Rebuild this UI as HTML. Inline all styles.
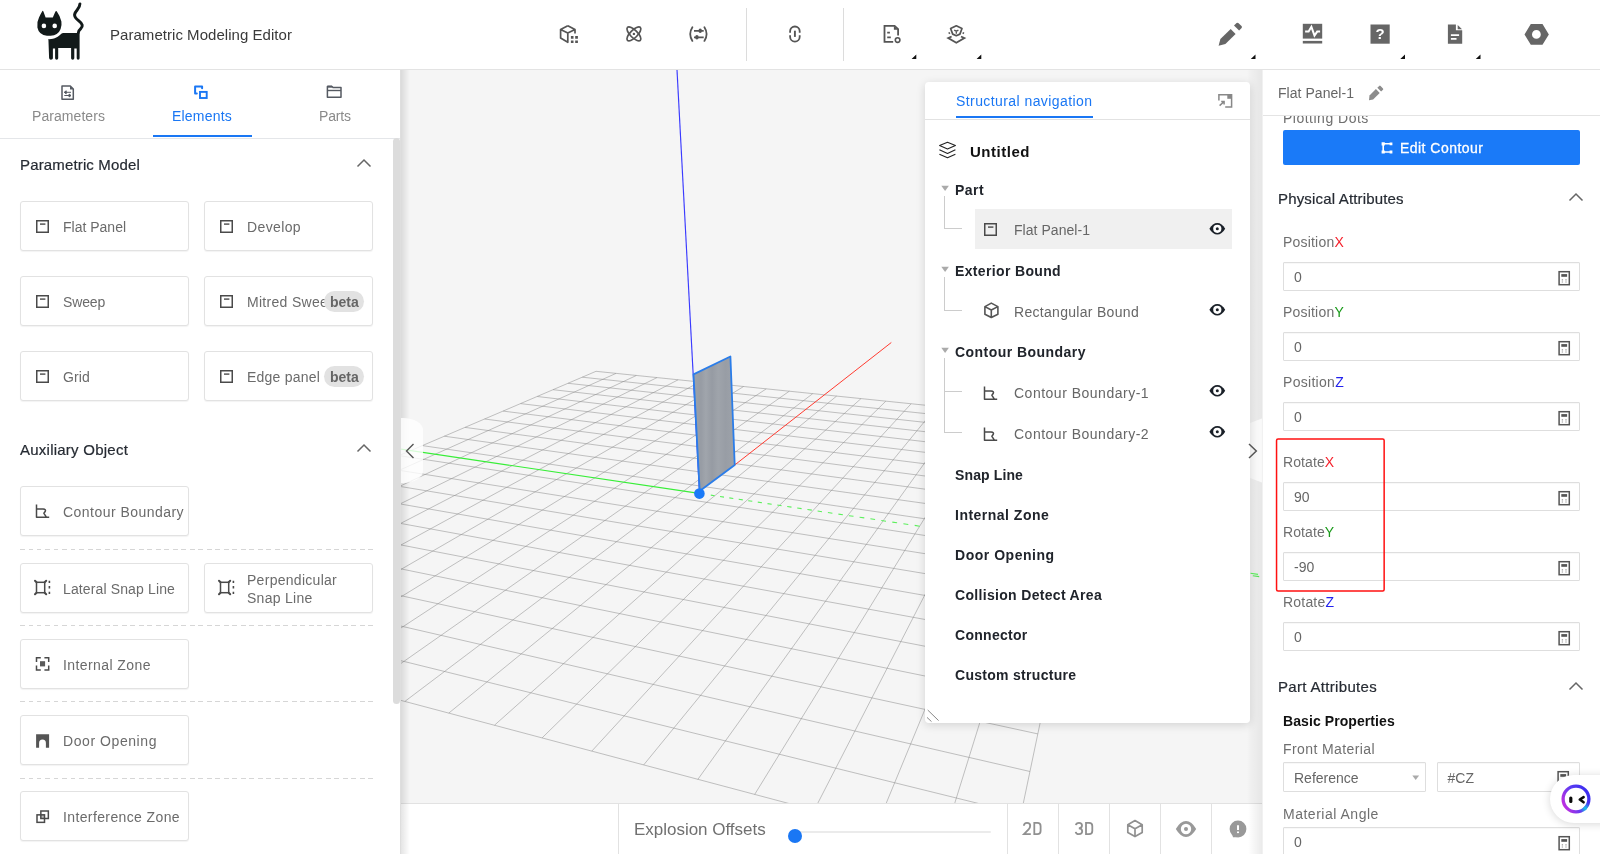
<!DOCTYPE html>
<html lang="en">
<head>
<meta charset="utf-8">
<title>Parametric Modeling Editor</title>
<style>
*{box-sizing:border-box;margin:0;padding:0}
html,body{width:1600px;height:854px;overflow:hidden;background:#fff}
body{font-family:"Liberation Sans",sans-serif;font-size:14px;color:#666;position:relative}
.abs{position:absolute}
.t{position:absolute;white-space:nowrap;line-height:1}
svg{position:absolute;overflow:visible}
#left,#right,#nav,#hdr,#bot{will-change:transform}
/* header */
#hdr{position:absolute;left:0;top:0;width:1600px;height:70px;background:#fff;border-bottom:1px solid #e3e3e3;z-index:5}
.vsep{position:absolute;top:8px;width:1px;height:53px;background:#dcdcdc}
/* left */
#left{position:absolute;left:0;top:70px;width:401px;height:784px;background:#fff;border-right:1px solid #dedede;z-index:4;overflow:hidden}
.tablbl{position:absolute;top:38px;font-size:14px;color:#8a8a8a;white-space:nowrap;line-height:16px}
.sech{position:absolute;left:20px;font-size:15px;color:#262b33;white-space:nowrap;line-height:18px;letter-spacing:-0.1px;-webkit-text-stroke:0.2px #262b33}
.btn{position:absolute;width:169px;height:50px;border:1px solid #e2e2e2;border-radius:3px;background:#fff;box-shadow:0 1px 1px rgba(0,0,0,.05)}
.btn .lb{position:absolute;left:42px;top:17px;font-size:14px;line-height:16px;color:#6b6b6b;white-space:nowrap}
.btn svg{left:15px;top:18px}
.dash{position:absolute;left:20px;width:353px;height:1px;background:repeating-linear-gradient(90deg,#d6d6d6 0 4.5px,transparent 4.5px 8.5px)}
.beta{position:absolute;top:14px;height:21px;border-radius:11px;background:#e2e2e2;color:#666;font-weight:bold;font-size:14px;line-height:22.5px;padding:0 5px 0 6.5px}
/* canvas */
#cv{position:absolute;left:401px;top:70px;width:862px;height:733px;background:#f5f5f5;overflow:hidden;z-index:1}
/* bottom bar */
#bot{position:absolute;left:401px;top:803px;width:862px;height:51px;background:#fff;box-shadow:inset 0 1px 0 #e2e2e2;z-index:3}
/* nav */
#nav{position:absolute;left:925px;top:82px;width:325px;height:641px;background:#fff;border-radius:4px;box-shadow:0 2px 10px rgba(0,0,0,.14);z-index:3}
.nb{position:absolute;left:30px;font-size:14px;font-weight:bold;color:#20242b;white-space:nowrap;line-height:16px}
.ni{position:absolute;left:89px;font-size:14px;color:#666;white-space:nowrap;line-height:16px}
/* right */
#right{position:absolute;left:1262px;top:70px;width:338px;height:784px;background:#fff;border-left:1px solid #f1f1f1;z-index:4;overflow:hidden}
.pl{position:absolute;left:20px;font-size:14px;color:#6f6f6f;white-space:nowrap;line-height:16px}
.inp{position:absolute;left:20px;width:297px;height:29px;border:1px solid #dedede;border-radius:1px;background:#fff;box-shadow:inset 0 1px 1px rgba(0,0,0,.03)}
.inp .v{position:absolute;left:10px;top:6px;font-size:14px;line-height:16px;color:#666}
</style>
</head>
<body>
<!-- HEADER -->
<div id="hdr">
<svg id="cat" style="left:30px;top:0" width="64" height="64" viewBox="0 0 64 64">
<path d="M12.4 10.9Q13 10.6 13.5 11.8L15.6 17.5H22.8L25.3 11.8Q26 10.6 26.7 11.2Q30.5 16.5 31.4 21.5Q32 25.5 30.6 29Q28.2 35.4 20.5 35.7H17Q9 35.2 7.4 27.5Q6.6 22 9 17.5Q10.5 14 12.4 10.9Z" fill="#121a1a"/>
<circle cx="13.9" cy="25.9" r="2.3" fill="#fff"/><circle cx="24.7" cy="25.9" r="2.3" fill="#fff"/>
<path d="M18.4 39.1C24 39.4 28.5 37 31.3 33.8Q32 33 33.3 33H49.6V58.3Q49.6 59.7 48.1 59.7Q46.7 59.7 46.7 58.3V48.4H44.3V58.3Q44.3 59.7 42.7 59.7Q41.1 59.7 41.1 58.3V48.1H28.2V58.3Q28.2 59.7 26.6 59.7Q25.1 59.7 25.1 58.3V48.4H22.9V58.3Q22.9 59.7 20.9 59.7Q19.2 59.7 19.1 58Z" fill="#121a1a"/>
<path d="M48.4 32.5C48.6 28.5 53 28.8 52.2 25C51.4 21 44 19.5 44.6 14.5C45.2 10.2 50 9 49.9 3.9" fill="none" stroke="#121a1a" stroke-width="3" stroke-linecap="round"/>
</svg>
<div class="t" id="title" style="letter-spacing:0.04px;left:110px;top:27px;font-size:15px;color:#3a3a3a">Parametric Modeling Editor</div>
<div class="vsep" style="left:746px"></div>
<div class="vsep" style="left:843px"></div>
<svg width="30" height="30" viewBox="0 0 30 30" style="left:554px;top:19px"><path d="M13.8 6.7L6.6 10.6V19.1L13.8 23.3V14.1L6.6 10.6M13.8 14.1L21 10.6L13.8 6.7M21 10.6V14.4" fill="none" stroke="#555" stroke-width="1.7" stroke-linejoin="round"/><path d="M16.9 17H19.5V19.7H16.9ZM21.2 17H23.9V19.7H21.2ZM16.9 21.4H19.5V24.1H16.9ZM21.2 21.4H23.9V24.1H21.2Z" fill="#555"/></svg>
<svg width="30" height="30" viewBox="0 0 30 30" style="left:619px;top:19px"><g fill="none" stroke="#555" stroke-width="1.7"><ellipse cx="14.9" cy="14.9" rx="9.1" ry="3.7" transform="rotate(45 14.9 14.9)"/><ellipse cx="14.9" cy="14.9" rx="9.1" ry="3.7" transform="rotate(-45 14.9 14.9)"/></g><circle cx="14.9" cy="14.9" r="1.2" fill="#555"/></svg>
<svg width="30" height="30" viewBox="0 0 30 30" style="left:684px;top:19px"><path d="M8.4 8.2Q6.2 11.5 6.2 15Q6.2 18.5 8.4 21.9M20.4 8.2Q22.6 11.5 22.6 15Q22.6 18.5 20.4 21.9" fill="none" stroke="#555" stroke-width="1.8" stroke-linecap="round"/><path d="M10 11.8H19.7M10 18.3H19.7" stroke="#555" stroke-width="1.8"/><ellipse cx="16.2" cy="11.8" rx="1.7" ry="2.2" fill="#555"/><ellipse cx="12.9" cy="18.3" rx="1.7" ry="2.2" fill="#555"/></svg>
<svg width="30" height="30" viewBox="0 0 30 30" style="left:780px;top:19px"><path d="M10.1 13.7V12.3A4.8 4.8 0 0 1 19.7 12.3V13.7M10.1 16.2V17.8A4.8 4.8 0 0 0 19.7 17.8V16.2" fill="none" stroke="#555" stroke-width="1.8"/><path d="M14.9 11.7V17.9" stroke="#555" stroke-width="1.9"/></svg>
<svg width="30" height="30" viewBox="0 0 30 30" style="left:876px;top:19px"><path d="M22.1 16.5V10.2L18.6 6.8H8.5V22.8H17.2" fill="none" stroke="#555" stroke-width="1.8" stroke-linejoin="miter"/><path d="M17.9 7V10.8H22Z" fill="#555"/><path d="M11.2 13.7H13.9M11.2 18.3H14.8" stroke="#555" stroke-width="1.8"/><circle cx="21.6" cy="21.1" r="2.3" fill="none" stroke="#555" stroke-width="1.6"/></svg>
<svg width="30" height="30" viewBox="0 0 30 30" style="left:941px;top:19px"><path d="M15.3 6.8L21 9.5L18.9 15.1L15.3 16.7L11.7 15.1L9.6 9.5Z" fill="none" stroke="#555" stroke-width="1.7" stroke-linejoin="round"/><path d="M13.2 11.1L15.3 12.2L17.4 11.1M15.3 12.2V14.8" fill="none" stroke="#555" stroke-width="1.3"/><path d="M10.6 17.5L7.2 19.1L15.3 23.8L23.4 19.1L20 17.5" fill="none" stroke="#555" stroke-width="1.8" stroke-linejoin="miter"/><path d="M7.8 13.4L8.8 14.8M22.8 13.4L21.8 14.8" stroke="#555" stroke-width="1.6"/></svg>
<svg width="40" height="40" viewBox="0 0 40 40" style="left:1212px;top:15px"><path d="M18.7 14.1L23.6 18.9L13.4 29L6.6 30.7L8.4 24.1Z" fill="#666"/><path d="M22 10.4L24.6 8Q25.6 7.3 26.6 8.2L29.5 11Q30.4 12 29.6 13L27.1 15.4Z" fill="#666"/></svg>
<svg width="40" height="40" viewBox="0 0 40 40" style="left:1292px;top:14px"><rect x="10.8" y="9.8" width="19.4" height="14.8" fill="#666"/><rect x="10.8" y="26.9" width="19.4" height="2.6" fill="#666"/><path d="M13.1 17.6H16.6L19.4 12.8L22.5 21.6L25.2 17.6H28.1" fill="none" stroke="#fff" stroke-width="2" stroke-linejoin="miter"/></svg>
<svg width="40" height="40" viewBox="0 0 40 40" style="left:1360px;top:14px"><rect x="10.5" y="10.5" width="19.2" height="19.2" fill="#666"/><text x="20.1" y="25.3" text-anchor="middle" font-family="Liberation Sans" font-weight="bold" font-size="15" fill="#fff">?</text></svg>
<svg width="40" height="40" viewBox="0 0 40 40" style="left:1435px;top:14px"><path d="M12.9 10.5H20.9V16.3H27.2V29.7H12.9Z" fill="#666"/><path d="M22.7 10.9L27 15.2H22.7Z" fill="#666"/><path d="M15.9 21.1H24.1M15.9 24.8H21.5" stroke="#fff" stroke-width="1.8"/></svg>
<svg width="40" height="40" viewBox="0 0 40 40" style="left:1517px;top:14px"><path d="M7.5 20.4L13.8 10.1H25.5L31.85 20.4L25.5 30.7H13.8Z M19.4 16A4.4 4.4 0 1 0 19.4 24.8A4.4 4.4 0 1 0 19.4 16Z" fill="#666" fill-rule="evenodd"/></svg>
<svg width="1600" height="70" viewBox="0 0 1600 70" style="left:0;top:0"><path d="M911.6 59H916.3V54.6ZM976.6 59H981.3V54.6ZM1250.8 59H1255.5V54.6ZM1400.3 59H1405V54.6ZM1475.8 59H1480.5V54.6Z" fill="#111"/></svg>
</div>

<!-- LEFT PANEL -->
<div id="left">
<!-- tabs -->
<svg width="30" height="30" viewBox="0 0 30 30" style="left:53px;top:7px"><path d="M9 9H17.3L20.3 12V22.2H9Z" fill="none" stroke="#555a62" stroke-width="1.5" stroke-linejoin="round"/><path d="M17 9V12.4H20.3Z" fill="#555a62"/><path d="M11.3 15.3H18M11.3 15.3L13.2 13.8V16.8ZM11.3 18.5H18M18 18.5L16.1 17V20Z" fill="#555a62" stroke="#555a62" stroke-width="1"/></svg>
<svg width="30" height="30" viewBox="0 0 30 30" style="left:186px;top:7px"><path d="M10.8 16.4H9.1V9.4H16.1V11.2" fill="none" stroke="#1a77f4" stroke-width="2" stroke-linejoin="round" stroke-linecap="round"/><rect x="14" y="14.9" width="6.7" height="6.1" fill="none" stroke="#1a77f4" stroke-width="1.9"/></svg>
<svg width="30" height="30" viewBox="0 0 30 30" style="left:319px;top:7px"><path d="M8.4 9.5H13L14 10.6H22V20.2H8.4Z" fill="none" stroke="#555a62" stroke-width="1.5" stroke-linejoin="round"/><path d="M8.4 9.6H13" stroke="#555a62" stroke-width="2"/><path d="M8.4 13.5H22" stroke="#555a62" stroke-width="1.4"/></svg>
<div class="tablbl" id="tb1" style="letter-spacing:0.06px;left:32px">Parameters</div>
<div class="tablbl" id="tb2" style="letter-spacing:0.21px;left:172px;color:#1a77f4">Elements</div>
<div class="tablbl" id="tb3" style="letter-spacing:-0.14px;left:319px">Parts</div>
<div class="abs" style="left:0;top:68px;width:400px;height:1px;background:#e4e6e9"></div>
<div class="abs" style="left:153px;top:65px;width:99px;height:2px;background:#1a77f4"></div>
<!-- scrollbar -->
<div class="abs" style="left:393px;top:68px;width:6.5px;height:566px;background:#dcdcdc;border-radius:3.5px"></div>
<!-- section 1 -->
<div class="sech" id="sh1" style="letter-spacing:0.15px;top:86px">Parametric Model</div>
<svg width="16" height="10" viewBox="0 0 16 10" style="left:356px;top:88px"><path d="M1.5 8.5L8 2L14.5 8.5" fill="none" stroke="#666" stroke-width="1.5"/></svg>
<div class="btn" style="left:20px;top:131px"><svg style="left:7px;top:10px" width="30" height="30" viewBox="0 0 30 30"><rect x="8.75" y="8.75" width="11.5" height="11.5" fill="none" stroke="#4a4a4a" stroke-width="1.5"/><path d="M12 12.1H17.4" stroke="#4a4a4a" stroke-width="1.4"/></svg><div class="lb" id="lb0" style="letter-spacing:-0.0px;">Flat Panel</div></div>
<div class="btn" style="left:204px;top:131px"><svg style="left:7px;top:10px" width="30" height="30" viewBox="0 0 30 30"><rect x="8.75" y="8.75" width="11.5" height="11.5" fill="none" stroke="#4a4a4a" stroke-width="1.5"/><path d="M12 12.1H17.4" stroke="#4a4a4a" stroke-width="1.4"/></svg><div class="lb" id="lb1" style="letter-spacing:0.38px;">Develop</div></div>
<div class="btn" style="left:20px;top:206px"><svg style="left:7px;top:10px" width="30" height="30" viewBox="0 0 30 30"><rect x="8.75" y="8.75" width="11.5" height="11.5" fill="none" stroke="#4a4a4a" stroke-width="1.5"/><path d="M12 12.1H17.4" stroke="#4a4a4a" stroke-width="1.4"/></svg><div class="lb" id="lb2" style="letter-spacing:-0.16px;">Sweep</div></div>
<div class="btn" style="left:204px;top:206px"><svg style="left:7px;top:10px" width="30" height="30" viewBox="0 0 30 30"><rect x="8.75" y="8.75" width="11.5" height="11.5" fill="none" stroke="#4a4a4a" stroke-width="1.5"/><path d="M12 12.1H17.4" stroke="#4a4a4a" stroke-width="1.4"/></svg><div class="lb" id="lb3" style="letter-spacing:0.3px">Mitred Swee</div><div class="beta" style="left:118.5px">beta</div></div>
<div class="btn" style="left:20px;top:281px"><svg style="left:7px;top:10px" width="30" height="30" viewBox="0 0 30 30"><rect x="8.75" y="8.75" width="11.5" height="11.5" fill="none" stroke="#4a4a4a" stroke-width="1.5"/><path d="M12 12.1H17.4" stroke="#4a4a4a" stroke-width="1.4"/></svg><div class="lb" id="lb4" style="letter-spacing:0.14px;">Grid</div></div>
<div class="btn" style="left:204px;top:281px"><svg style="left:7px;top:10px" width="30" height="30" viewBox="0 0 30 30"><rect x="8.75" y="8.75" width="11.5" height="11.5" fill="none" stroke="#4a4a4a" stroke-width="1.5"/><path d="M12 12.1H17.4" stroke="#4a4a4a" stroke-width="1.4"/></svg><div class="lb" id="lb5" style="letter-spacing:0.22px;">Edge panel</div><div class="beta" style="left:118.5px">beta</div></div>
<div class="sech" id="sh2" style="letter-spacing:0.24px;top:370.5px">Auxiliary Object</div>
<svg width="16" height="10" viewBox="0 0 16 10" style="left:356px;top:373px"><path d="M1.5 8.5L8 2L14.5 8.5" fill="none" stroke="#666" stroke-width="1.5"/></svg>
<div class="btn" style="left:20px;top:416px"><svg style="left:7px;top:8px" width="30" height="30" viewBox="0 0 30 30"><path d="M8.5 9.4V22.3H21.2M8.5 14.1H15.2Q18.2 14.2 17.3 16.3L15.9 18.3L18.4 22.2" fill="none" stroke="#4a4a4a" stroke-width="1.5" stroke-linejoin="round"/></svg><div class="lb" id="lb6" style="letter-spacing:0.46px;">Contour Boundary</div></div>
<div class="dash" style="top:479px"></div>
<div class="btn" style="left:20px;top:493px"><svg style="left:7px;top:8px" width="30" height="30" viewBox="0 0 30 30"><rect x="8.5" y="10.3" width="8.2" height="10.4" fill="none" stroke="#4a4a4a" stroke-width="1.5"/><path d="M7 8.8L8.5 10.3M18.2 8.8L16.7 10.3M7 22.2L8.5 20.7M18.2 22.2L16.7 20.7" stroke="#4a4a4a" stroke-width="2" stroke-linecap="round"/><path d="M21.4 8.8V10.9M21.4 14.1V16.5M21.4 19.7V22.1" stroke="#4a4a4a" stroke-width="1.6"/></svg><div class="lb" id="lb7" style="letter-spacing:0.13px;">Lateral Snap Line</div></div>
<div class="btn" style="left:204px;top:493px"><svg style="left:7px;top:8px" width="30" height="30" viewBox="0 0 30 30"><rect x="8.5" y="10.3" width="8.2" height="10.4" fill="none" stroke="#4a4a4a" stroke-width="1.5"/><path d="M7 8.8L8.5 10.3M18.2 8.8L16.7 10.3M7 22.2L8.5 20.7M18.2 22.2L16.7 20.7" stroke="#4a4a4a" stroke-width="2" stroke-linecap="round"/><path d="M21.4 8.8V10.9M21.4 14.1V16.5M21.4 19.7V22.1" stroke="#4a4a4a" stroke-width="1.6"/></svg><div class="lb" id="lb8" style="letter-spacing:0.28px;top:7px;line-height:18px">Perpendicular<br>Snap Line</div></div>
<div class="dash" style="top:555px"></div>
<div class="btn" style="left:20px;top:569px"><svg style="left:7px;top:9px" width="30" height="30" viewBox="0 0 30 30"><path d="M8.5 13V8.7H12.8M16.4 8.7H20.7V13M20.7 16.6V20.9H16.4M12.8 20.9H8.5V16.6" fill="none" stroke="#4a4a4a" stroke-width="1.5"/><rect x="12" y="12.2" width="5.1" height="5.2" fill="#5a5a5a"/></svg><div class="lb" id="lb9" style="letter-spacing:0.42px;">Internal Zone</div></div>
<div class="dash" style="top:631px"></div>
<div class="btn" style="left:20px;top:645px"><svg style="left:7px;top:10px" width="30" height="30" viewBox="0 0 30 30"><path d="M8.1 8.3H21.1V21.8H17.9V17A3.4 3.5 0 0 0 11.1 17V21.8H8.1Z" fill="#555"/></svg><div class="lb" id="lb10" style="letter-spacing:0.57px;">Door Opening</div></div>
<div class="dash" style="top:708px"></div>
<div class="btn" style="left:20px;top:721px"><svg style="left:7px;top:10px" width="30" height="30" viewBox="0 0 30 30"><rect x="12.1" y="12.1" width="4.8" height="4.4" fill="#bbb"/><rect x="12.85" y="9" width="7.5" height="7.5" fill="none" stroke="#4a4a4a" stroke-width="1.5"/><rect x="9" y="12.85" width="7.5" height="7.5" fill="none" stroke="#4a4a4a" stroke-width="1.5"/></svg><div class="lb" id="lb11" style="letter-spacing:0.38px;">Interference Zone</div></div>
</div>

<!-- CANVAS -->
<div id="cv">
<svg width="862" height="733" viewBox="0 0 862 733" style="left:0;top:0">
<path d="M195.0 301.3L-354.1 536.3M195.0 301.3L701.8 353.5M215.0 303.4L-323.8 544.3M181.3 307.2L700.0 362.2M235.3 305.5L-292.4 552.7M167.1 313.3L698.1 371.4M256.0 307.6L-259.9 561.3M152.0 319.7L696.0 381.1M277.1 309.8L-226.2 570.3M136.3 326.5L693.9 391.5M298.5 312.0L-191.4 579.5M119.6 333.6L691.5 402.5M320.4 314.2L-155.2 589.1M102.1 341.1L689.1 414.4M342.6 316.5L-117.7 599.1M83.6 349.0L686.4 427.0M365.2 318.9L-78.7 609.5M64.0 357.4L683.6 440.6M388.3 321.2L-38.2 620.2M43.3 366.2L680.5 455.3M411.7 323.7L3.9 631.4M21.3 375.6L677.2 471.1M435.6 326.1L47.8 643.1M-2.1 385.6L673.6 488.2M460.0 328.6L93.5 655.2M-27.0 396.3L669.7 506.8M484.8 331.2L141.1 667.9M-53.5 407.7L665.5 527.1M510.1 333.8L190.8 681.1M-82.0 419.8L660.8 549.3M535.9 336.4L242.7 694.9M-112.4 432.9L655.7 573.6M562.2 339.1L296.9 709.3M-145.2 446.9L650.1 600.6M589.0 341.9L353.7 724.4M-180.5 462.0L643.8 630.5M616.4 344.7L413.2 740.2M-218.6 478.3L636.8 663.9M644.3 347.6L475.5 756.8M-260.0 496.0L629.0 701.5M672.7 350.5L541.0 774.2M-305.0 515.3L620.1 744.0M701.8 353.5L609.9 792.5M-354.1 536.3L609.9 792.5" fill="none" stroke="#8c8c8c" stroke-opacity=".58" stroke-width=".9"/>
<path d="M298.1 423.4L-198.0 349.7" stroke="#38ee38" stroke-width="1.2" fill="none"/>
<path d="M309.8 425.1L313.7 425.7M319.0 426.5L323.0 427.1M328.3 427.9L332.3 428.5M337.7 429.3L341.8 429.9M347.2 430.7L351.3 431.3M356.8 432.1L361.0 432.7M366.5 433.6L370.7 434.2M376.3 435.0L380.6 435.7M386.2 436.5L390.5 437.1M396.2 438.0L400.6 438.6M406.4 439.5L410.8 440.1M416.6 441.0L421.0 441.7M426.9 442.5L431.4 443.2M437.4 444.1L441.9 444.8M447.9 445.7L452.5 446.3M458.6 447.2L463.3 447.9M469.4 448.8L474.1 449.5M480.3 450.5L485.0 451.2M491.3 452.1L496.1 452.8M502.4 453.8L507.3 454.5M513.7 455.4L518.6 456.2M525.0 457.1L530.0 457.9M536.5 458.8L541.5 459.6M548.1 460.5L553.2 461.3M559.9 462.3L565.0 463.1M571.7 464.1L576.9 464.8M583.7 465.8L588.9 466.6M595.8 467.6L601.1 468.4M608.0 469.5L613.4 470.2M620.4 471.3L625.8 472.1M632.9 473.1L638.3 474.0M645.5 475.0L651.0 475.8M658.3 476.9L663.8 477.7M671.2 478.8L676.8 479.7M684.2 480.8L689.9 481.6M697.4 482.7L703.1 483.6M710.7 484.7L716.5 485.6M724.1 486.7L730.0 487.6M737.7 488.7L743.6 489.6M751.5 490.8L757.4 491.7M765.4 492.8L771.4 493.7M779.4 494.9L785.5 495.8M793.6 497.0L799.7 497.9M807.9 499.1L814.1 500.1M822.4 501.3L828.7 502.2M837.0 503.5L843.4 504.4M851.8 505.7L858.2 506.6M866.7 507.9L873.2 508.9M881.8 510.1L888.4 511.1M897.1 512.4L903.7 513.4M912.5 514.7L919.2 515.7M928.1 517.0L934.9 518.0M943.9 519.4L950.7 520.4M959.8 521.7L966.7 522.7M975.9 524.1L982.9 525.1M992.1 526.5L999.2 527.6M1008.6 529.0L1015.7 530.0M1025.2 531.4L1032.4 532.5M1041.9 533.9L1049.2 535.0M1058.9 536.4L1066.3 537.5M1076.0 539.0L1083.5 540.1M1093.3 541.6L1100.9 542.7M1110.8 544.2L1118.4 545.3M1128.5 546.8L1136.2 547.9" stroke="#5cf05c" stroke-width="1.15" fill="none"/>
<path d="M333.7 395L490.3 272.5" stroke="#ff3b30" stroke-width="1" fill="none"/>
</svg>
<svg width="862" height="733" viewBox="0 0 862 733" style="left:0;top:0">
  <defs>
    <linearGradient id="pg" x1="0" y1="0" x2="1" y2="0">
      <stop offset="0" stop-color="#9da2a9"/><stop offset=".18" stop-color="#979ca4"/><stop offset=".3" stop-color="#a0a5ac"/>
      <stop offset=".45" stop-color="#969ba3"/><stop offset=".6" stop-color="#9fa4ab"/><stop offset=".78" stop-color="#989da5"/><stop offset="1" stop-color="#9ea3aa"/>
    </linearGradient>
  </defs>
  <!-- Z axis -->
  <path d="M298.5 423.5L276 0" stroke="#3a3aff" stroke-width="1.15" fill="none"/>
  <!-- panel -->
  <path d="M292.5 304.4L329.4 286.5L333.7 395L298.7 421Z" fill="url(#pg)" stroke="#2b7de9" stroke-width="1.8" stroke-linejoin="round"/>
  <circle cx="298.4" cy="423.6" r="5.3" fill="#1a7af8"/>
</svg>
<!-- collapse handles -->
<div class="abs" style="left:0;top:0;width:9px;height:733px;background:linear-gradient(90deg,rgba(0,0,0,.11),rgba(0,0,0,0))"></div>
<div class="abs" style="left:0;top:348px;width:22px;height:65px;background:rgba(255,255,255,.8);border-radius:0 20px 20px 0 / 0 12px 12px 0"></div>
<svg width="10" height="16" viewBox="0 0 10 16" style="left:4px;top:373px"><path d="M8.5 1L1.5 8L8.5 15" fill="none" stroke="#555" stroke-width="1.4"/></svg>
<!-- inner shadows at the sides -->
<div class="abs" style="left:846px;top:0;width:16px;height:733px;background:linear-gradient(90deg,rgba(0,0,0,0) 0,rgba(0,0,0,.025) 25%,rgba(0,0,0,.06) 92%,rgba(0,0,0,.09) 100%)"></div>
<svg width="862" height="733" viewBox="0 0 862 733" style="left:0;top:0"><path d="M849 353L862 348V413L849 408Z" fill="#fafafa" fill-opacity=".92"/><path d="M849.5 503.3L857 504.4" stroke="#5cf05c" stroke-width="1.1"/></svg>
</div>

<!-- BOTTOM BAR -->
<div id="bot">
<div class="abs" style="left:847px;top:0;width:15px;height:51px;background:linear-gradient(90deg,rgba(0,0,0,0),rgba(0,0,0,.085))"></div>
<div class="abs" style="left:0;top:0;width:9px;height:51px;background:linear-gradient(90deg,rgba(0,0,0,.10),rgba(0,0,0,0))"></div>
<div class="abs" style="left:217px;top:0;width:1px;height:51px;background:#e2e2e2"></div>
<div class="t" id="expl" style="letter-spacing:-0.02px;left:233px;top:18px;font-size:17px;color:#707070">Explosion Offsets</div>
<div class="abs" style="left:394px;top:28px;width:196px;height:2px;background:#ebebeb;border-radius:1px"></div>
<div class="abs" style="left:387px;top:26px;width:14px;height:14px;background:#1a77f4;border-radius:7px"></div>
<div class="abs" style="left:606px;top:0;width:1px;height:51px;background:#e2e2e2"></div>
<div class="abs" style="left:657px;top:0;width:1px;height:51px;background:#e2e2e2"></div>
<div class="abs" style="left:708px;top:0;width:1px;height:51px;background:#e2e2e2"></div>
<div class="abs" style="left:759px;top:0;width:1px;height:51px;background:#e2e2e2"></div>
<div class="abs" style="left:810px;top:0;width:1px;height:51px;background:#e2e2e2"></div>
<svg width="20" height="14" viewBox="0 0 20 14" style="left:622.2px;top:19px"><path d="M0.9 3.7Q0.9 0.9 4 0.9Q7.2 0.9 7.2 3.7Q7.2 5.6 5.6 7.5L1 12.1H7.8M11.3 0.9H14.4Q17.6 0.9 17.6 4V9Q17.6 12.1 14.4 12.1H11.3Z" fill="none" stroke="#909090" stroke-width="1.8"/></svg>
<svg width="20" height="14" viewBox="0 0 20 14" style="left:673.5px;top:19px"><path d="M0.9 3.2Q1.2 0.9 4 0.9Q7 0.9 7 3.6Q7 6.3 3.8 6.3Q7.2 6.3 7.2 9.3Q7.2 12.1 4 12.1Q1 12.1 0.7 9.8M11 0.9H14.1Q17.3 0.9 17.3 4V9Q17.3 12.1 14.1 12.1H11Z" fill="none" stroke="#909090" stroke-width="1.8"/></svg>
<svg width="20" height="20" viewBox="0 0 20 20" style="left:724px;top:15px"><path d="M10 2.6L17.2 6.8V14.5L10 18.6L2.8 14.5V6.8ZM2.8 6.8L10 10.8L17.2 6.8M10 10.8V18.6" fill="none" stroke="#909090" stroke-width="1.7" stroke-linejoin="round"/></svg>
<svg width="30" height="30" viewBox="0 0 30 30" style="left:770.1px;top:11px"><path d="M4.8 15Q9.4 7.1 15 7.1Q20.6 7.1 25.2 15Q20.6 22.9 15 22.9Q9.4 22.9 4.8 15Z" fill="#999"/><circle cx="15" cy="15" r="5.2" fill="#fff"/><circle cx="15" cy="15" r="2" fill="#999"/></svg>
<svg width="30" height="30" viewBox="0 0 30 30" style="left:821.5px;top:10.75px"><circle cx="15" cy="15" r="8.4" fill="#999"/><path d="M9.2 20.5L10 23.3H14Z" fill="#999"/><path d="M15 11.2V16" stroke="#fff" stroke-width="2"/><rect x="14" y="17.5" width="2" height="1.6" fill="#fff"/></svg>
</div>

<!-- NAV PANEL -->
<div id="nav">
<div class="t" id="navt" style="letter-spacing:0.42px;left:31px;top:12px;font-size:14px;color:#1a77f4">Structural navigation</div>
<div class="abs" style="left:0;top:37px;width:325px;height:1px;background:#e2e2e2"></div>
<div class="abs" style="left:31px;top:33.5px;width:137px;height:2px;background:#1a77f4"></div>
<svg width="40" height="40" viewBox="0 0 40 40" style="left:277px;top:2px"><path d="M16.9 16.6V10.8H29.6V22.9H23.2" fill="none" stroke="#888" stroke-width="1.5"/><rect x="25.3" y="10.8" width="4.3" height="4" fill="#888"/><path d="M17.6 21.6L21.6 18M19.2 17.6H22.1V20.5" fill="none" stroke="#888" stroke-width="1.5"/></svg>
<svg width="40" height="40" viewBox="0 0 40 40" style="left:7px;top:52px"><path d="M15.5 8.3L23.4 11.5L15.5 15L7.6 11.5ZM7.4 15.7L15.5 19.4L23.4 15.7M7.4 20.2L15.5 23.7L23.4 20.2" fill="none" stroke="#222" stroke-width="1.1" stroke-linejoin="round"/></svg>
<div class="nb" id="nb0" style="letter-spacing:0.52px;left:45px;top:62px;font-size:15px;color:#111">Untitled</div>
<svg width="10" height="8" viewBox="0 0 10 8" style="left:16px;top:103px"><path d="M0.3 0.8H7.9L4.1 6Z" fill="#aaa"/></svg>
<div class="nb" id="nb1" style="letter-spacing:0.44px;top:100px">Part</div>
<div class="abs" style="left:19px;top:114px;width:18px;height:33px;border-left:1px solid #ccc;border-bottom:1px solid #ccc"></div>
<div class="abs" style="left:50px;top:127px;width:257px;height:40px;background:#f0f0f0"></div>
<svg width="30" height="30" viewBox="0 0 30 30" style="left:51px;top:132.5px"><rect x="8.75" y="8.75" width="11.5" height="11.5" fill="none" stroke="#4a4a4a" stroke-width="1.5"/><path d="M12 12.1H17.4" stroke="#4a4a4a" stroke-width="1.4"/></svg>
<div class="ni" id="ni1" style="letter-spacing:0.04px;top:140px">Flat Panel-1</div>
<svg width="30" height="30" viewBox="0 0 30 30" style="left:277px;top:132px"><path d="M7.4 14.8Q10.8 9 15.3 9Q19.8 9 23.2 14.8Q19.8 20.6 15.3 20.6Q10.8 20.6 7.4 14.8Z" fill="#1a2028"/><circle cx="15.3" cy="14.8" r="4.1" fill="#fff"/><circle cx="15.3" cy="14.8" r="1.5" fill="#1a2028"/></svg>
<svg width="10" height="8" viewBox="0 0 10 8" style="left:16px;top:184px"><path d="M0.3 0.8H7.9L4.1 6Z" fill="#aaa"/></svg>
<div class="nb" id="nb2" style="letter-spacing:0.35px;top:181px">Exterior Bound</div>
<div class="abs" style="left:19px;top:195px;width:18px;height:34px;border-left:1px solid #ccc;border-bottom:1px solid #ccc"></div>
<svg width="30" height="30" viewBox="0 0 30 30" style="left:51px;top:214px"><path d="M15.3 7.1L21.9 10.6V18.2L15.3 21.5L8.9 18.2V10.6ZM8.9 10.6L15.3 14L21.9 10.6M15.3 14V21.5" fill="none" stroke="#555" stroke-width="1.6" stroke-linejoin="round"/></svg>
<div class="ni" id="ni2" style="letter-spacing:0.3px;top:222px">Rectangular Bound</div>
<svg width="30" height="30" viewBox="0 0 30 30" style="left:277px;top:213px"><path d="M7.4 14.8Q10.8 9 15.3 9Q19.8 9 23.2 14.8Q19.8 20.6 15.3 20.6Q10.8 20.6 7.4 14.8Z" fill="#1a2028"/><circle cx="15.3" cy="14.8" r="4.1" fill="#fff"/><circle cx="15.3" cy="14.8" r="1.5" fill="#1a2028"/></svg>
<svg width="10" height="8" viewBox="0 0 10 8" style="left:16px;top:265px"><path d="M0.3 0.8H7.9L4.1 6Z" fill="#aaa"/></svg>
<div class="nb" id="nb3" style="letter-spacing:0.46px;top:262px">Contour Boundary</div>
<div class="abs" style="left:19px;top:276px;width:18px;height:75px;border-left:1px solid #ccc;border-bottom:1px solid #ccc"></div>
<div class="abs" style="left:19px;top:309px;width:18px;height:1px;background:#ccc"></div>
<svg width="30" height="30" viewBox="0 0 30 30" style="left:51px;top:294.5px"><path d="M8.5 9.4V22.3H21.2M8.5 14.1H15.2Q18.2 14.2 17.3 16.3L15.9 18.3L18.4 22.2" fill="none" stroke="#4a4a4a" stroke-width="1.5" stroke-linejoin="round"/></svg>
<div class="ni" id="ni3" style="letter-spacing:0.5px;top:303px">Contour Boundary-1</div>
<svg width="30" height="30" viewBox="0 0 30 30" style="left:277px;top:294px"><path d="M7.4 14.8Q10.8 9 15.3 9Q19.8 9 23.2 14.8Q19.8 20.6 15.3 20.6Q10.8 20.6 7.4 14.8Z" fill="#1a2028"/><circle cx="15.3" cy="14.8" r="4.1" fill="#fff"/><circle cx="15.3" cy="14.8" r="1.5" fill="#1a2028"/></svg>
<svg width="30" height="30" viewBox="0 0 30 30" style="left:51px;top:335.5px"><path d="M8.5 9.4V22.3H21.2M8.5 14.1H15.2Q18.2 14.2 17.3 16.3L15.9 18.3L18.4 22.2" fill="none" stroke="#4a4a4a" stroke-width="1.5" stroke-linejoin="round"/></svg>
<div class="ni" id="ni4" style="letter-spacing:0.5px;top:344px">Contour Boundary-2</div>
<svg width="30" height="30" viewBox="0 0 30 30" style="left:277px;top:335px"><path d="M7.4 14.8Q10.8 9 15.3 9Q19.8 9 23.2 14.8Q19.8 20.6 15.3 20.6Q10.8 20.6 7.4 14.8Z" fill="#1a2028"/><circle cx="15.3" cy="14.8" r="4.1" fill="#fff"/><circle cx="15.3" cy="14.8" r="1.5" fill="#1a2028"/></svg>
<div class="nb" id="nb4" style="letter-spacing:0.12px;top:385px">Snap Line</div>
<div class="nb" id="nb5" style="letter-spacing:0.49px;top:425px">Internal Zone</div>
<div class="nb" id="nb6" style="letter-spacing:0.52px;top:465px">Door Opening</div>
<div class="nb" id="nb7" style="letter-spacing:0.32px;top:505px">Collision Detect Area</div>
<div class="nb" id="nb8" style="letter-spacing:0.28px;top:545px">Connector</div>
<div class="nb" id="nb9" style="letter-spacing:0.29px;top:585px">Custom structure</div>
<svg width="14" height="14" viewBox="0 0 14 14" style="left:2px;top:627px"><path d="M0.7 1L11.6 11.6M0 8.4L4.5 12.6" stroke="#888" stroke-width="1" fill="none"/></svg>
</div>

<svg width="10" height="16" viewBox="0 0 10 16" style="left:1248px;top:443px;z-index:6"><path d="M1 1L8.3 8L1 15" fill="none" stroke="#555" stroke-width="1.5"/></svg>
<!-- RIGHT PANEL -->
<div id="right">
<div class="t" id="rt" style="letter-spacing:0.04px;left:15px;top:16px;font-size:14px;color:#666">Flat Panel-1</div>
<svg width="18" height="18" viewBox="0 0 18 18" style="left:105px;top:14px"><path d="M7.9 5.1L11.7 8.9L5.1 15.5L1 16.2L1.5 11.5Z" fill="#8c8c8c"/><path d="M9.3 3.8L11.2 1.9Q11.9 1.3 12.6 2L15 4.4Q15.6 5.1 15 5.8L13.1 7.6Z" fill="#8c8c8c"/></svg>
<div class="abs" style="left:0;top:45px;width:338px;height:1px;background:#e4e4e4"></div>
<div class="abs" style="left:0;top:46px;width:338px;height:12px;overflow:hidden"><div class="pl" style="top:-6px;letter-spacing:0.5px">Plotting Dots</div></div>
<div class="abs" id="ebtn" style="left:20px;top:60px;width:297px;height:35px;background:#1a7af8;border-radius:2px"></div>
<svg width="14" height="14" viewBox="0 0 14 14" style="left:117px;top:71px"><path d="M3.2 2.8V11M3.2 2.8H10M3.2 11H10" fill="none" stroke="#fff" stroke-width="1.6"/><path d="M1.6 1.2H4.8V4.4H1.6ZM1.6 9.4H4.8V12.6H1.6ZM9.6 1.4H12.4V4.2H9.6ZM9.6 9.6H12.4V12.4H9.6Z" fill="#fff"/></svg>
<div class="t" id="ebt" style="letter-spacing:0.46px;left:137px;top:71px;font-size:14px;color:#fff;-webkit-text-stroke:0.3px #fff">Edit Contour</div>
<div class="sech" id="rs1" style="letter-spacing:0.17px;left:15px;top:120px">Physical Attributes</div>
<svg width="16" height="10" viewBox="0 0 16 10" style="left:305px;top:122px"><path d="M1.5 8.5L8 2L14.5 8.5" fill="none" stroke="#666" stroke-width="1.5"/></svg>
<div class="pl" id="pl1" style="letter-spacing:0.2px;top:164px">Position<span style="color:#f5222d">X</span></div>
<div class="inp" style="top:191.5px"><div class="v">0</div><svg width="14" height="16" viewBox="0 0 14 16" style="left:274px;top:7px"><rect x="1.1" y="1.7" width="10.2" height="13" fill="none" stroke="#555" stroke-width="1.5"/><rect x="3.3" y="4.1" width="5.8" height="2.7" fill="#555"/><path d="M4.4 9.3V12.6M8 9.3V12.6" stroke="#999" stroke-width="1.3" stroke-dasharray="1.2 0.9"/></svg></div>
<div class="pl" id="pl2" style="letter-spacing:0.2px;top:234px">Position<span style="color:#1a9a1a">Y</span></div>
<div class="inp" style="top:261.5px"><div class="v">0</div><svg width="14" height="16" viewBox="0 0 14 16" style="left:274px;top:7px"><rect x="1.1" y="1.7" width="10.2" height="13" fill="none" stroke="#555" stroke-width="1.5"/><rect x="3.3" y="4.1" width="5.8" height="2.7" fill="#555"/><path d="M4.4 9.3V12.6M8 9.3V12.6" stroke="#999" stroke-width="1.3" stroke-dasharray="1.2 0.9"/></svg></div>
<div class="pl" id="pl3" style="letter-spacing:0.29px;top:304px">Position<span style="color:#2222ee">Z</span></div>
<div class="inp" style="top:331.5px"><div class="v">0</div><svg width="14" height="16" viewBox="0 0 14 16" style="left:274px;top:7px"><rect x="1.1" y="1.7" width="10.2" height="13" fill="none" stroke="#555" stroke-width="1.5"/><rect x="3.3" y="4.1" width="5.8" height="2.7" fill="#555"/><path d="M4.4 9.3V12.6M8 9.3V12.6" stroke="#999" stroke-width="1.3" stroke-dasharray="1.2 0.9"/></svg></div>
<div class="pl" id="pl4" style="letter-spacing:0.09px;top:384px">Rotate<span style="color:#f5222d">X</span></div>
<div class="inp" style="top:411.5px"><div class="v">90</div><svg width="14" height="16" viewBox="0 0 14 16" style="left:274px;top:7px"><rect x="1.1" y="1.7" width="10.2" height="13" fill="none" stroke="#555" stroke-width="1.5"/><rect x="3.3" y="4.1" width="5.8" height="2.7" fill="#555"/><path d="M4.4 9.3V12.6M8 9.3V12.6" stroke="#999" stroke-width="1.3" stroke-dasharray="1.2 0.9"/></svg></div>
<div class="pl" id="pl5" style="letter-spacing:0.09px;top:454px">Rotate<span style="color:#1a9a1a">Y</span></div>
<div class="inp" style="top:481.5px"><div class="v">-90</div><svg width="14" height="16" viewBox="0 0 14 16" style="left:274px;top:7px"><rect x="1.1" y="1.7" width="10.2" height="13" fill="none" stroke="#555" stroke-width="1.5"/><rect x="3.3" y="4.1" width="5.8" height="2.7" fill="#555"/><path d="M4.4 9.3V12.6M8 9.3V12.6" stroke="#999" stroke-width="1.3" stroke-dasharray="1.2 0.9"/></svg></div>
<div class="pl" id="pl6" style="letter-spacing:0.2px;top:524px">Rotate<span style="color:#2222ee">Z</span></div>
<div class="inp" style="top:551.5px"><div class="v">0</div><svg width="14" height="16" viewBox="0 0 14 16" style="left:274px;top:7px"><rect x="1.1" y="1.7" width="10.2" height="13" fill="none" stroke="#555" stroke-width="1.5"/><rect x="3.3" y="4.1" width="5.8" height="2.7" fill="#555"/><path d="M4.4 9.3V12.6M8 9.3V12.6" stroke="#999" stroke-width="1.3" stroke-dasharray="1.2 0.9"/></svg></div>
<svg width="338" height="784" viewBox="0 0 338 784" style="left:0;top:0;pointer-events:none"><rect x="13.55" y="369.1" width="107.6" height="151.8" rx="1.5" fill="none" stroke="#ff1010" stroke-width="1.5"/></svg>
<div class="sech" id="rs2" style="letter-spacing:0.32px;left:15px;top:608px">Part Attributes</div>
<svg width="16" height="10" viewBox="0 0 16 10" style="left:305px;top:611px"><path d="M1.5 8.5L8 2L14.5 8.5" fill="none" stroke="#666" stroke-width="1.5"/></svg>
<div class="t" id="bp" style="letter-spacing:0.08px;left:20px;top:644px;font-size:14px;font-weight:bold;color:#111">Basic Properties</div>
<div class="pl" id="pl7" style="letter-spacing:0.4px;top:670.5px">Front Material</div>
<div class="inp" style="top:692px;width:143px;height:30px"><div class="v" style="top:7px">Reference</div><svg width="8" height="6" viewBox="0 0 8 6" style="left:128px;top:12px"><path d="M0.3 0.5H7.1L3.7 5Z" fill="#aaa"/></svg></div>
<div class="inp" style="left:173.5px;top:692px;width:143.5px;height:30px"><div class="v" style="top:7px">#CZ</div><svg width="14" height="16" viewBox="0 0 14 16" style="left:119px;top:7px"><rect x="1.1" y="1.7" width="10.2" height="13" fill="none" stroke="#555" stroke-width="1.5"/><rect x="3.3" y="4.1" width="5.8" height="2.7" fill="#555"/><path d="M4.4 9.3V12.6M8 9.3V12.6" stroke="#999" stroke-width="1.3" stroke-dasharray="1.2 0.9"/></svg></div>
<div class="pl" id="pl8" style="letter-spacing:0.51px;top:736px">Material Angle</div>
<div class="inp" style="top:756.5px"><div class="v">0</div><svg width="14" height="16" viewBox="0 0 14 16" style="left:274px;top:7px"><rect x="1.1" y="1.7" width="10.2" height="13" fill="none" stroke="#555" stroke-width="1.5"/><rect x="3.3" y="4.1" width="5.8" height="2.7" fill="#555"/><path d="M4.4 9.3V12.6M8 9.3V12.6" stroke="#999" stroke-width="1.3" stroke-dasharray="1.2 0.9"/></svg></div>
<div class="abs" style="left:287.3px;top:704.6px;width:60px;height:48.6px;background:#fff;border-radius:24.3px 0 0 24.3px;box-shadow:0 1px 9px rgba(0,0,0,.16)"></div>
<svg width="34" height="34" viewBox="0 0 34 34" style="left:295.5px;top:712.4px"><defs><linearGradient id="bg1" x1="0" y1=".75" x2="1" y2=".25"><stop offset="0" stop-color="#c22ee0"/><stop offset=".5" stop-color="#5b3cf2"/><stop offset="1" stop-color="#3a2cf0"/></linearGradient><linearGradient id="bg2" x1=".2" y1="1" x2="1" y2=".2"><stop offset="0" stop-color="#18c4e8" stop-opacity="0"/><stop offset=".5" stop-color="#18c4e8"/><stop offset="1" stop-color="#18c4e8" stop-opacity="0"/></linearGradient></defs><circle cx="17" cy="17" r="12.9" fill="#fff" stroke="url(#bg1)" stroke-width="3.3"/><path d="M29.6 19.8A12.9 12.9 0 0 1 19.8 29.6" fill="none" stroke="url(#bg2)" stroke-width="3.3"/><rect x="10.2" y="14.5" width="3.2" height="6.6" rx="1.5" fill="#0a0a0a"/><path d="M24.6 15.1L20.8 17.5L24.6 20.3" fill="none" stroke="#0a0a0a" stroke-width="2.6" stroke-linecap="round" stroke-linejoin="round"/></svg>
</div>
</body>
</html>
